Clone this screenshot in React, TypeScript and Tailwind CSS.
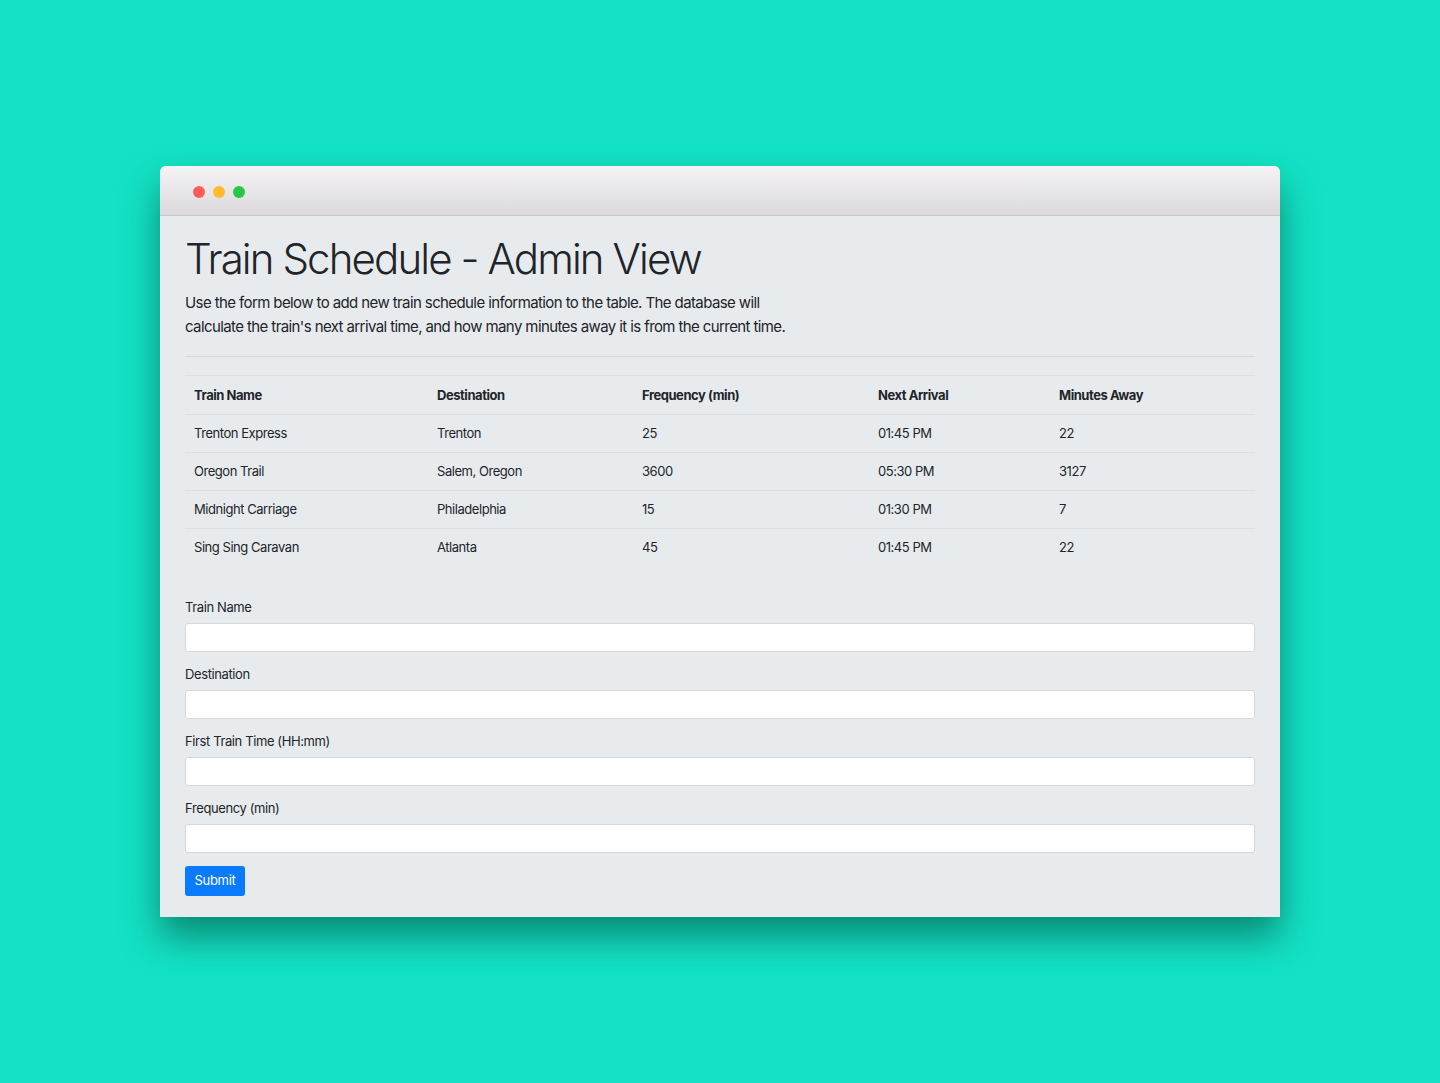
const TRAINS = [
  { name: 'Trenton Express', destination: 'Trenton', frequency: '25', next: '01:45 PM', away: '22' },
  { name: 'Oregon Trail', destination: 'Salem, Oregon', frequency: '3600', next: '05:30 PM', away: '3127' },
  { name: 'Midnight Carriage', destination: 'Philadelphia', frequency: '15', next: '01:30 PM', away: '7' },
  { name: 'Sing Sing Caravan', destination: 'Atlanta', frequency: '45', next: '01:45 PM', away: '22' },
]

const FIELDS = ['Train Name', 'Destination', 'First Train Time (HH:mm)', 'Frequency (min)']

export default function App() {
  return (
    <div className="min-h-[1083px] w-full bg-[#13e2c5] pt-[166px] font-['Inter',sans-serif] text-[#212529]">
      <div className="mx-auto w-[1120px] rounded-t-[6px] bg-[#e8ebee] shadow-[0_20px_36px_rgba(0,50,40,0.5)]">
        {/* barra da janela */}
        <div className="flex h-[50px] items-center gap-[8px] rounded-t-[6px] border-b border-[#c9c7ca] bg-gradient-to-b from-[#f5f4f5] to-[#dbd9dc] pl-[33px] pt-[2px]">
          <span className="h-[12px] w-[12px] rounded-full bg-[#fe5f57]" />
          <span className="h-[12px] w-[12px] rounded-full bg-[#febc2e]" />
          <span className="h-[12px] w-[12px] rounded-full bg-[#28c840]" />
        </div>

        <div className="px-[25px] pb-[21px] pt-[18px]">
          <h1 className="text-[42px] font-light leading-[1.2] tracking-[-0.045em]">Train Schedule - Admin View</h1>
          <p className="mt-[7px] max-w-[610px] text-[15px] leading-[24px] tracking-[-0.04em]">
            Use the form below to add new train schedule information to the table. The database will calculate the train's next arrival time, and how many minutes away it is from the current time.
          </p>
          <hr className="mt-[17px] border-[#d5d8db]" />

          {/* tabela */}
          <table className="mt-[18px] w-full table-fixed border-collapse text-[13px] tracking-[-0.035em]">
            <thead>
              <tr className="h-[39px] border-y border-[#dcdfe2] text-left">
                <th className="w-[243px] pl-[9px] font-bold">Train Name</th>
                <th className="w-[205px] pl-[9px] font-bold">Destination</th>
                <th className="w-[236px] pl-[9px] font-bold">Frequency (min)</th>
                <th className="w-[181px] pl-[9px] font-bold">Next Arrival</th>
                <th className="pl-[9px] font-bold">Minutes Away</th>
              </tr>
            </thead>
            <tbody>
              {TRAINS.map((t, i) => (
                <tr key={t.name} className={i > 0 ? 'h-[38px] border-t border-[#dcdfe2]' : 'h-[38px]'}>
                  <td className="pl-[9px]">{t.name}</td>
                  <td className="pl-[9px]">{t.destination}</td>
                  <td className="pl-[9px]">{t.frequency}</td>
                  <td className="pl-[9px]">{t.next}</td>
                  <td className="pl-[9px]">{t.away}</td>
                </tr>
              ))}
            </tbody>
          </table>

          {/* formulário */}
          <form className="mt-[31px] flex flex-col" onSubmit={e => e.preventDefault()}>
            {FIELDS.map(f => (
              <div key={f} className="mb-[13px] flex flex-col">
                <label className="mb-[6px] text-[13px] leading-[19px] tracking-[-0.03em]">{f}</label>
                <input className="h-[29px] rounded-[3px] border border-[#d6d9dc] bg-white px-[10px] text-[13px] outline-none" />
              </div>
            ))}
            <button type="submit"
              className="h-[30px] w-[60px] rounded-[3px] bg-[#0a7bff] text-[13px] tracking-[-0.02em] text-white">
              Submit
            </button>
          </form>
        </div>
      </div>
    </div>
  )
}
